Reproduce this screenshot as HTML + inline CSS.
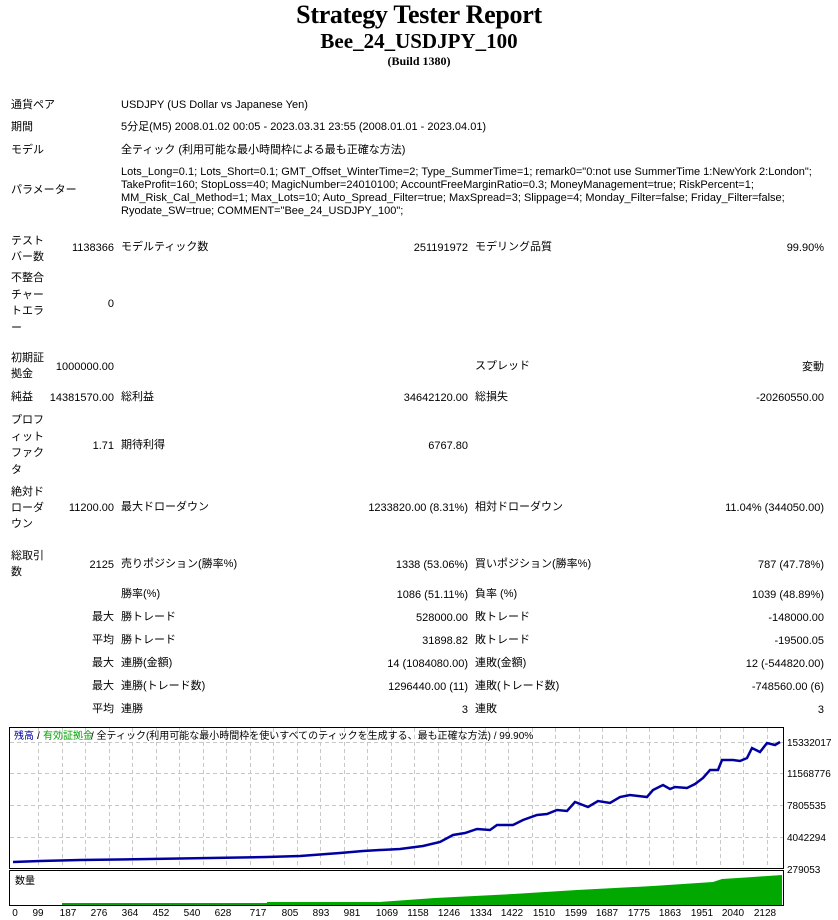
<!DOCTYPE html>
<html><head><meta charset="utf-8"><style>
body{margin:0;width:838px;height:920px;background:#fff;position:relative;overflow:hidden;font-family:"Liberation Sans","Noto Sans CJK JP",sans-serif;font-size:11px;color:#000}
div.t{position:absolute;line-height:14px;white-space:nowrap}
.a{left:11px}.b{right:724px}.c{left:121px}.d{right:370px}.e{left:475px}.f{right:14px}
h1,h2,h3{position:absolute;left:0;width:838px;text-align:center;margin:0;font-family:"Liberation Serif",serif;font-weight:bold;white-space:nowrap}
</style></head><body>
<h1 style="top:1px;font-size:26px;line-height:28px;letter-spacing:-0.3px">Strategy Tester Report</h1>
<h2 style="top:29px;font-size:21px;line-height:24px">Bee_24_USDJPY_100</h2>
<h3 style="top:54px;font-size:12px;line-height:14px">(Build 1380)</h3>

<div class="t a" style="top:98px">通貨ペア</div><div class="t c" style="top:98px">USDJPY (US Dollar vs Japanese Yen)</div>
<div class="t a" style="top:120px">期間</div><div class="t c" style="top:120px">5分足(M5) 2008.01.02 00:05 - 2023.03.31 23:55 (2008.01.01 - 2023.04.01)</div>
<div class="t a" style="top:143px">モデル</div><div class="t c" style="top:143px">全ティック (利用可能な最小時間枠による最も正確な方法)</div>
<div class="t a" style="top:183px">パラメーター</div>
<div class="t c" style="top:166px;line-height:13px">Lots_Long=0.1; Lots_Short=0.1; GMT_Offset_WinterTime=2; Type_SummerTime=1; remark0="0:not use SummerTime 1:NewYork 2:London";<br>TakeProfit=160; StopLoss=40; MagicNumber=24010100; AccountFreeMarginRatio=0.3; MoneyManagement=true; RiskPercent=1;<br>MM_Risk_Cal_Method=1; Max_Lots=10; Auto_Spread_Filter=true; MaxSpread=3; Slippage=4; Monday_Filter=false; Friday_Filter=false;<br>Ryodate_SW=true; COMMENT="Bee_24_USDJPY_100";</div>

<div class="t a" style="top:233px;line-height:16px">テスト<br>バー数</div><div class="t b" style="top:241px">1138366</div><div class="t c" style="top:240px">モデルティック数</div><div class="t d" style="top:241px">251191972</div><div class="t e" style="top:240px">モデリング品質</div><div class="t f" style="top:241px">99.90%</div>

<div class="t a" style="top:270px;line-height:16.7px">不整合<br>チャー<br>トエラ<br>ー</div><div class="t b" style="top:297px">0</div>

<div class="t a" style="top:350px;line-height:16px">初期証<br>拠金</div><div class="t b" style="top:360px">1000000.00</div><div class="t e" style="top:359px">スプレッド</div><div class="t f" style="top:360px">変動</div>

<div class="t a" style="top:390px">純益</div><div class="t b" style="top:391px">14381570.00</div><div class="t c" style="top:390px">総利益</div><div class="t d" style="top:391px">34642120.00</div><div class="t e" style="top:390px">総損失</div><div class="t f" style="top:391px">-20260550.00</div>

<div class="t a" style="top:412px;line-height:16.7px">プロフ<br>ィット<br>ファク<br>タ</div><div class="t b" style="top:439px">1.71</div><div class="t c" style="top:438px">期待利得</div><div class="t d" style="top:439px">6767.80</div>

<div class="t a" style="top:484px;line-height:16px">絶対ド<br>ローダ<br>ウン</div><div class="t b" style="top:501px">11200.00</div><div class="t c" style="top:500px">最大ドローダウン</div><div class="t d" style="top:501px">1233820.00 (8.31%)</div><div class="t e" style="top:500px">相対ドローダウン</div><div class="t f" style="top:501px">11.04% (344050.00)</div>

<div class="t a" style="top:548px;line-height:16px">総取引<br>数</div><div class="t b" style="top:558px">2125</div><div class="t c" style="top:557px">売りポジション(勝率%)</div><div class="t d" style="top:558px">1338 (53.06%)</div><div class="t e" style="top:557px">買いポジション(勝率%)</div><div class="t f" style="top:558px">787 (47.78%)</div>

<div class="t c" style="top:587px">勝率(%)</div><div class="t d" style="top:588px">1086 (51.11%)</div><div class="t e" style="top:587px">負率 (%)</div><div class="t f" style="top:588px">1039 (48.89%)</div>
<div class="t b" style="top:610px">最大</div><div class="t c" style="top:610px">勝トレード</div><div class="t d" style="top:611px">528000.00</div><div class="t e" style="top:610px">敗トレード</div><div class="t f" style="top:611px">-148000.00</div>
<div class="t b" style="top:633px">平均</div><div class="t c" style="top:633px">勝トレード</div><div class="t d" style="top:634px">31898.82</div><div class="t e" style="top:633px">敗トレード</div><div class="t f" style="top:634px">-19500.05</div>
<div class="t b" style="top:656px">最大</div><div class="t c" style="top:656px">連勝(金額)</div><div class="t d" style="top:657px">14 (1084080.00)</div><div class="t e" style="top:656px">連敗(金額)</div><div class="t f" style="top:657px">12 (-544820.00)</div>
<div class="t b" style="top:679px">最大</div><div class="t c" style="top:679px">連勝(トレード数)</div><div class="t d" style="top:680px">1296440.00 (11)</div><div class="t e" style="top:679px">連敗(トレード数)</div><div class="t f" style="top:680px">-748560.00 (6)</div>
<div class="t b" style="top:702px">平均</div><div class="t c" style="top:702px">連勝</div><div class="t d" style="top:703px">3</div><div class="t e" style="top:702px">連敗</div><div class="t f" style="top:703px">3</div>

<svg style="position:absolute;left:0;top:720px" width="838" height="200" viewBox="0 720 838 200" font-family="Liberation Sans, Noto Sans CJK JP, sans-serif" font-size="10">
<rect x="9.5" y="727.5" width="774" height="141" fill="#fff" stroke="#000"/>
<rect x="9.5" y="870.5" width="774" height="35" fill="#fff" stroke="#000"/>
<g stroke="#c8c8c8" stroke-dasharray="4,3" fill="none">
<path d="M10 742.5H783M10 773.5H783M10 805.5H783M10 837.5H783"/>
<path d="M38.5 728V868M62.5 728V868M85.5 728V868M109.5 728V868M132.5 728V868M156.5 728V868M179.5 728V868M203.5 728V868M226.5 728V868M250.5 728V868M273.5 728V868M297.5 728V868M320.5 728V868M344.5 728V868M367.5 728V868M391.5 728V868M414.5 728V868M438.5 728V868M461.5 728V868M485.5 728V868M508.5 728V868M532.5 728V868M555.5 728V868M579.5 728V868M602.5 728V868M626.5 728V868M649.5 728V868M673.5 728V868M696.5 728V868M720.5 728V868M743.5 728V868M767.5 728V868"/>
</g>
<polygon fill="#00a800" points="62,905 62,903 267,903 267,902 380,902 435,898 513,894 577,890 653,886 713,882 722,879 753,877 782,875 782,905"/>
<polyline fill="none" stroke="#0000a0" stroke-width="2.5" stroke-linejoin="miter" points="13,862 40,861 80,860 150,859 267,857 300,856 340,853 363,851 380,850 400,849 423,846 440,842 453,835 465,833 477,829 490,830 497,825 513,825 523,820 537,815 547,814 557,810 567,811 575,802 588,807 598,801 610,803 620,797 630,795 647,797 653,790 663,785 670,789 675,787 687,788 695,784 703,778 710,770 718,770 722,760 733,760 740,761 747,758 752,748 760,752 767,743 775,745 780,742"/>
<text x="14" y="739" fill="#0000a0">残高</text><text x="37" y="739" fill="#000">/</text><text x="43" y="739" fill="#00a000">有効証拠金</text><text x="91" y="739">/ 全ティック(利用可能な最小時間枠を使いすべてのティックを生成する、最も正確な方法) / 99.90%</text>
<text x="15" y="884">数量</text>
<g text-anchor="start"><text x="787" y="746">15332017</text><text x="787" y="777">11568776</text><text x="787" y="809">7805535</text><text x="787" y="841">4042294</text><text x="787" y="873">279053</text></g>
<g text-anchor="middle"><text x="15" y="916">0</text><text x="38" y="916">99</text><text x="68" y="916">187</text><text x="99" y="916">276</text><text x="130" y="916">364</text><text x="161" y="916">452</text><text x="192" y="916">540</text><text x="223" y="916">628</text><text x="258" y="916">717</text><text x="290" y="916">805</text><text x="321" y="916">893</text><text x="352" y="916">981</text><text x="387" y="916">1069</text><text x="418" y="916">1158</text><text x="449" y="916">1246</text><text x="481" y="916">1334</text><text x="512" y="916">1422</text><text x="544" y="916">1510</text><text x="576" y="916">1599</text><text x="607" y="916">1687</text><text x="639" y="916">1775</text><text x="670" y="916">1863</text><text x="702" y="916">1951</text><text x="733" y="916">2040</text><text x="765" y="916">2128</text></g>
</svg>
</body></html>
